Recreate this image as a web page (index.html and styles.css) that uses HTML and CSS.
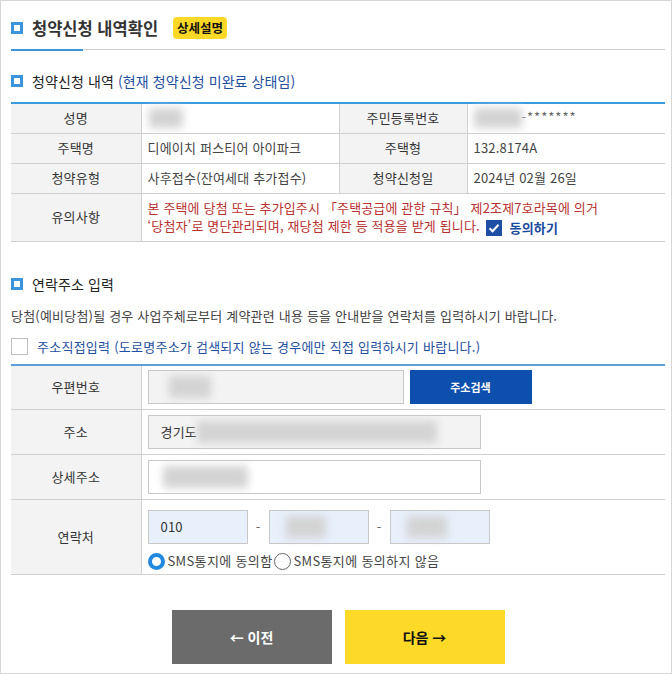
FILE: index.html
```html
<!DOCTYPE html>
<html lang="ko">
<head>
<meta charset="utf-8">
<link rel="stylesheet" href="styles.css">
</head>
<body>
<div class="wrap">
  <div class="page-head">
    <span class="sq"></span>
    <h1 class="page-title">청약신청 내역확인</h1>
    <span class="badge">상세설명</span>
  </div>

  <h2 class="sub-title"><span class="sq"></span>청약신청 내역 <span class="blue">(현재 청약신청 미완료 상태임)</span></h2>

  <table class="info">
    <colgroup><col class="c1"><col class="c2"><col class="c3"><col></colgroup>
    <tr>
      <th>성명</th><td><span class="blur b-name"></span></td>
      <th>주민등록번호</th><td><span class="blur b-rrn"></span><span class="stars">-*******</span></td>
    </tr>
    <tr>
      <th>주택명</th><td>디에이치 퍼스티어 아이파크</td>
      <th>주택형</th><td>132.8174A</td>
    </tr>
    <tr>
      <th>청약유형</th><td>사후접수(잔여세대 추가접수)</td>
      <th>청약신청일</th><td>2024년 02월 26일</td>
    </tr>
    <tr class="note-row">
      <th>유의사항</th>
      <td colspan="3" class="note">본 주택에 당첨 또는 추가입주시 「주택공급에 관한 규칙」 제2조제7호라목에 의거<br>‘당첨자’로 명단관리되며, 재당첨 제한 등 적용을 받게 됩니다. <span class="agree"><span class="chk"><svg viewBox="0 0 16 16" width="16" height="16"><path d="M3.5 8.2 L6.6 11.2 L12.5 4.8" fill="none" stroke="#fff" stroke-width="2"/></svg></span>동의하기</span></td>
    </tr>
  </table>

  <h2 class="sub-title sec2"><span class="sq"></span>연락주소 입력</h2>
  <p class="desc">당첨(예비당첨)될 경우 사업주체로부터 계약관련 내용 등을 안내받을 연락처를 입력하시기 바랍니다.</p>
  <label class="direct"><span class="ebox"></span>주소직접입력 (도로명주소가 검색되지 않는 경우에만 직접 입력하시기 바랍니다.)</label>

  <table class="addr">
    <colgroup><col class="c1"><col></colgroup>
    <tr>
      <th>우편번호</th>
      <td><div class="row"><div class="inp gray w-zip"><span class="blur b-zip"></span></div><button class="search">주소검색</button></div></td>
    </tr>
    <tr>
      <th>주소</th>
      <td><div class="inp gray w-addr"><span class="txt">경기도</span><span class="blur b-addr"></span></div></td>
    </tr>
    <tr>
      <th>상세주소</th>
      <td><div class="inp w-addr"><span class="blur b-detail"></span></div></td>
    </tr>
    <tr class="tel-row">
      <th>연락처</th>
      <td>
        <div class="row tel">
          <div class="inp lb w-tel"><span class="txt">010</span></div><span class="dash">-</span>
          <div class="inp lb w-tel"><span class="blur b-tel"></span></div><span class="dash">-</span>
          <div class="inp lb w-tel"><span class="blur b-tel"></span></div>
        </div>
        <div class="radios">
          <span class="radio on"></span><span class="rtxt">SMS통지에 동의함</span>
          <span class="radio"></span><span class="rtxt">SMS통지에 동의하지 않음</span>
        </div>
      </td>
    </tr>
  </table>

  <div class="btns">
    <button class="btn prev">← 이전</button>
    <button class="btn next">다음 →</button>
  </div>
</div>
</body>
</html>
```

FILE: styles.css
```css
* { box-sizing: border-box; }
html, body { margin: 0; padding: 0; background: #fff; }
body {
  font-family: "Noto Sans CJK KR", "Noto Sans", sans-serif;
  color: #333;
  font-size: 13px;
}
.wrap {
  width: 672px;
  height: 674px;
  border: 1px solid #d6d6d6;
  padding: 0 6px 0 10px;
}
.sq {
  display: inline-block;
  width: 12px;
  height: 12px;
  border: 3px solid #3a95dc;
  background: #fff;
  margin-right: 9px;
  flex: none;
}
.page-head {
  position: relative;
  display: flex;
  align-items: center;
  height: 49px;
  padding-top: 6px;
  border-bottom: 1px solid #cfcfcf;
}
.page-head::after {
  content: "";
  position: absolute;
  left: 0;
  bottom: -2px;
  width: 72px;
  height: 2px;
  background: #3a95dc;
}
.page-title {
  margin: 0;
  font-size: 16.5px;
  font-weight: 700;
  color: #333;
  letter-spacing: 0;
}
.badge {
  margin-left: 15px;
  background: #fdd826;
  color: #111;
  font-size: 12.5px;
  font-weight: 700;
  border-radius: 4px;
  padding: 0 4px;
  height: 22px;
  line-height: 22px;
}
.sub-title {
  display: flex;
  align-items: center;
  margin: 0;
  height: 20px;
  margin-top: 21px;
  font-size: 14px;
  font-weight: 400;
  color: #222;
  letter-spacing: 0.1px;
}
.sub-title .blue { color: #1f4f9f; margin-left: 4px; }
.blue { color: #1f4f9f; }

table {
  width: 100%;
  border-collapse: collapse;
  table-layout: fixed;
}
.info { margin-top: 11px; border-top: 2px solid #3a9be0; }
col.c1 { width: 130px; }
col.c2 { width: 198px; }
col.c3 { width: 128px; }
th, td {
  border: 1px solid #d0d0d0;
  font-size: 13px;
  line-height: 18px;
  letter-spacing: 0.2px;
}
tr > :first-child { border-left: none; }
tr > :last-child { border-right: none; }
th {
  background: #f3f3f3;
  font-weight: 400;
  color: #333;
  text-align: center;
}
.info th, .info td { height: 30px; padding: 0 6px; }
.info td { color: #444; }
.info .note-row th, .info .note-row td { height: 48px; }
.note {
  color: #b8312f !important;
  line-height: 18px;
  padding-top: 2px !important;
  letter-spacing: 0.15px !important;
}
.agree {
  display: inline-flex;
  align-items: center;
  color: #1a4aa0;
  font-weight: 700;
  vertical-align: middle;
}
.chk {
  display: inline-flex;
  align-items: center;
  justify-content: center;
  width: 16px;
  height: 16px;
  background: #1c4ea6;
  margin-right: 8px;
  margin-left: 2px;
}
.blur {
  display: inline-block;
  background: #d3d3d3;
  filter: blur(4px);
  vertical-align: middle;
}
.b-name { width: 34px; height: 20px; margin-left: 1px; }
.b-rrn { width: 48px; height: 20px; }
.stars { color: #666; letter-spacing: 1px; }

.sec2 { margin-top: 32px; }
.desc {
  margin: 13px 0 0;
  font-size: 13px;
  line-height: 18px;
  color: #444;
  letter-spacing: 0.2px;
}
.direct {
  display: flex;
  align-items: center;
  margin-top: 13px;
  color: #1f4f9f;
  font-size: 13px;
  line-height: 18px;
  letter-spacing: 0.25px;
}
.ebox {
  display: inline-block;
  width: 17px;
  height: 17px;
  border: 1px solid #bdbdbd;
  background: #fff;
  margin-right: 9px;
}
.addr { margin-top: 8px; border-top: 2px solid #5ba0d8; }
.addr th, .addr td { height: 45px; padding: 0 6px; }
.addr .tel-row th, .addr .tel-row td { height: 75px; }
.row { display: flex; align-items: center; }
.inp {
  height: 34px;
  border: 1px solid #c8c8c8;
  background: #fff;
  display: flex;
  align-items: center;
  padding-left: 12px;
  color: #333;
}
.inp.gray { background: #f3f3f3; }
.inp.lb { background: #e8f0fc; }
.w-zip { width: 256px; }
.w-addr { width: 333px; }
.w-tel { width: 100px; }
.search {
  margin-left: 6px;
  width: 122px;
  height: 34px;
  border: none;
  background: #0d4fad;
  color: #fff;
  font-family: inherit;
  font-size: 11px;
  font-weight: 700;
}
.b-zip { width: 42px; height: 22px; margin-left: 8px; }
.b-addr { width: 240px; height: 22px; }
.b-detail { width: 85px; height: 22px; margin-left: 2px; }
.b-tel { width: 40px; height: 22px; margin-left: 4px; }
.txt { line-height: 18px; }
.tel .dash { width: 21px; text-align: center; color: #666; }
.tel-row td { padding-top: 6px; }
.radios {
  display: flex;
  align-items: center;
  margin-top: 8px;
  font-size: 13px;
  color: #444;
  letter-spacing: 0.35px;
}
.radio {
  display: inline-block;
  width: 17px;
  height: 17px;
  border-radius: 50%;
  border: 1px solid #666;
  background: #fff;
  margin-right: 2px;
}
.radio.on { border: 4px solid #2389e0; margin-right: 3px; }
.rtxt { margin-right: 2px; }

.btns {
  display: flex;
  justify-content: center;
  gap: 13px;
  margin-top: 35px;
}
.btn {
  width: 160px;
  height: 54px;
  border: none;
  font-family: inherit;
  font-size: 14px;
  font-weight: 700;
}
.prev { background: #6b6b6b; color: #fff; }
.next { background: #fdda28; color: #111; }
```
